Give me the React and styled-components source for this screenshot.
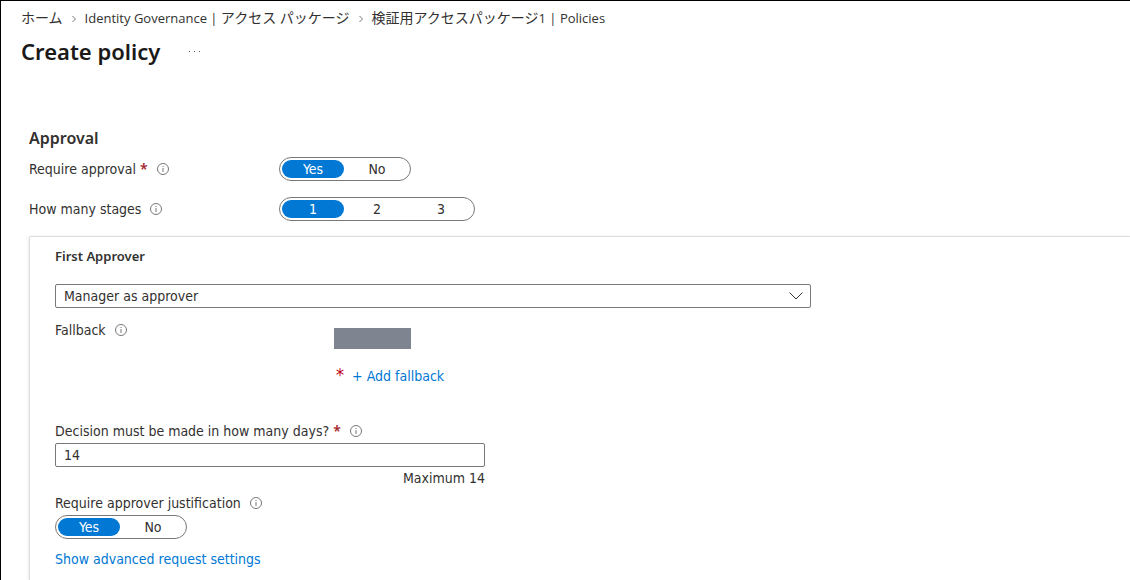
import { useState } from "react";
import styled, { createGlobalStyle } from "styled-components";

const GlobalStyle = createGlobalStyle`
    * {
        box-sizing: border-box;
    }

    body {
        margin: 0;
        background-color: #fff;
        color: #323130;
        font-family: "DejaVu Sans Condensed", "Noto Sans CJK JP", sans-serif;
        font-size: 14px;
        line-height: 20px;
    }

    button, input, select {
        font: inherit;
        color: inherit;
    }
`;

const Page = styled.div`
    display: flex;
    flex-direction: column;
    min-height: 100vh;
    border-top: 1px solid #000;
    border-left: 1px solid #000;
`;

// header
const Header = styled.header`
    padding: 7px 20px 0;
    font-family: "Open Sans", "Noto Sans CJK JP", sans-serif;
`;

const Breadcrumb = styled.nav`
    display: flex;
    align-items: center;
    font-size: 13px;
    line-height: 20px;
    white-space: pre;
`;

const Crumb = styled.a`
    color: #323130;
    text-decoration: none;

    &:hover {
        text-decoration: underline;
    }
`;

const Ja = styled.span`
    font-size: 14px;
`;

const Separator = styled.svg`
    width: 4px;
    height: 8px;
    margin: 2px 9px 0;
    fill: none;
    stroke: #797775;
`;

const TitleRow = styled.div`
    display: flex;
    align-items: center;
    gap: 28px;
    padding-top: 8px;
`;

const Title = styled.h1`
    margin: 0;
    font-family: "Noto Sans", sans-serif;
    font-size: 22px;
    font-weight: 600;
    line-height: 30px;
    color: #1b1a19;
`;

const MoreButton = styled.button`
    display: flex;
    padding: 2px 0 0;
    border: none;
    background: none;
    cursor: pointer;
`;

// form
const Form = styled.form`
    display: flex;
    flex-direction: column;
    flex: 1;
    padding: 62px 0 0 28px;
`;

const SectionTitle = styled.h2`
    margin: 0 0 9px;
    font-family: "Noto Sans", sans-serif;
    font-size: 16px;
    font-weight: 600;
    line-height: 20px;
`;

const FieldRow = styled.div`
    display: flex;
    align-items: center;
    height: 24px;
    margin-bottom: 16px;
`;

const LabelCell = styled.div`
    width: 250px;
`;

const LabelLine = styled.div`
    display: flex;
    align-items: center;
    gap: 9px;
    height: 24px;
`;

const Required = styled.span`
    color: #a4262c;
    font-family: "Noto Sans", sans-serif;
    font-weight: 600;
    line-height: 16px;
`;

const InfoSvg = styled.svg`
    width: 12px;
    height: 12px;
    flex: none;
    fill: none;
    stroke: #797775;
`;

const ToggleGroup = styled.div`
    display: inline-flex;
    height: 24px;
    padding: 2px;
    border: 1px solid #7a7876;
    border-radius: 12px;
`;

const ToggleOption = styled.label`
    position: relative;
    width: 62px;
    margin-right: 2px;
    border-radius: 9px;
    line-height: 18px;
    text-align: center;
    cursor: pointer;
    background-color: ${({ $active }) => ($active ? '#0078d4' : 'transparent')};
    color: ${({ $active }) => ($active ? '#fff' : '#323130')};

    &:last-child {
        margin-right: 0;
    }
`;

const ToggleInput = styled.input`
    position: absolute;
    inset: 0;
    margin: 0;
    opacity: 0;
    cursor: pointer;
`;

const Card = styled.section`
    flex: 1;
    margin-top: -1px;
    padding: 9px 24px 10px 25px;
    border-top: 1px solid #e1dfdd;
    border-left: 1px solid #e1dfdd;
    border-top-left-radius: 2px;
    box-shadow: -1px 0 3px rgba(0, 0, 0, 0.08);
`;

const CardTitle = styled.h3`
    margin: 0 0 18px;
    font-family: "Noto Sans", sans-serif;
    font-size: 13px;
    font-weight: 600;
    line-height: 20px;
`;

const SelectWrapper = styled.div`
    position: relative;
    max-width: 756px;
    margin-bottom: 10px;
`;

const Select = styled.select`
    display: block;
    width: 100%;
    height: 24px;
    padding: 0 32px 0 8px;
    border: 1px solid #7a7876;
    border-radius: 2px;
    background-color: #fff;
    appearance: none;
`;

const SelectArrow = styled.svg`
    position: absolute;
    top: 8px;
    right: 8px;
    width: 14px;
    height: 8px;
    fill: none;
    stroke: #323130;
    pointer-events: none;
`;

const FallbackRow = styled.div`
    display: flex;
    align-items: flex-start;
    margin-bottom: 33px;
`;

const FallbackLabel = styled.div`
    width: 279px;
`;

const FallbackBody = styled.div`
    display: flex;
    flex-direction: column;
    gap: 17px;
    padding-top: 10px;
`;

const MaskedName = styled.div`
    width: 77px;
    height: 21px;
    background-color: #7f8590;
`;

const AddLine = styled.div`
    display: flex;
    align-items: flex-start;
    gap: 8px;
    padding-left: 2px;
`;

const Star = styled.span`
    color: #c00016;
    font-family: "DejaVu Sans Condensed", sans-serif;
    font-size: 18px;
    line-height: 18px;
`;

const LinkButton = styled.button`
    padding: 0;
    border: none;
    background: none;
    color: #0078d4;
    cursor: pointer;
`;

const DaysField = styled.div`
    max-width: 430px;
    margin-bottom: 3px;
`;

const TextInput = styled.input`
    display: block;
    width: 100%;
    height: 24px;
    padding: 0 8px;
    border: 1px solid #7a7876;
    border-radius: 2px;
    outline: none;
`;

const Hint = styled.div`
    padding-top: 1px;
    text-align: right;
`;

const Link = styled.a`
    display: block;
    width: fit-content;
    margin-top: 10px;
    color: #0078d4;
    text-decoration: none;
`;

function InfoIcon() {
    return (
        <InfoSvg viewBox="0 0 12 12" aria-hidden="true">
            <circle cx="6" cy="6" r="5.5" />
            <path d="M6 5v4M6 3v1" />
        </InfoSvg>
    )
}

function Chevron() {
    return (
        <Separator viewBox="0 0 4 8" aria-hidden="true">
            <path d="M0.5 1l3 3-3 3" />
        </Separator>
    )
}

function Toggle({ name, options, labelledBy }) {
    const [value, setValue] = useState(options[0]);

    return (
        <ToggleGroup role="radiogroup" aria-labelledby={labelledBy}>
            {options.map((option) => (
                <ToggleOption key={option} $active={option === value}>
                    <ToggleInput
                        type="radio"
                        name={name}
                        checked={option === value}
                        onChange={() => setValue(option)}
                    />
                    {option}
                </ToggleOption>
            ))}
        </ToggleGroup>
    )
}

function App() {
    const [days, setDays] = useState('14');

    return (
        <>
            <GlobalStyle />
            <Page>
                <Header>
                    <Breadcrumb aria-label="Breadcrumb">
                        <Crumb href="#home"><Ja>ホーム</Ja></Crumb>
                        <Chevron />
                        <Crumb href="#packages">Identity Governance | <Ja>アクセス パッケージ</Ja></Crumb>
                        <Chevron />
                        <Crumb href="#policies"><Ja>検証用アクセスパッケージ</Ja>1 | Policies</Crumb>
                    </Breadcrumb>
                    <TitleRow>
                        <Title>Create policy</Title>
                        <MoreButton type="button" aria-label="More">
                            <svg width="12" height="2" fill="#605e5c">
                                <rect x="1" width="1" height="1" />
                                <rect x="6" width="1" height="1" />
                                <rect x="11" width="1" height="1" />
                            </svg>
                        </MoreButton>
                    </TitleRow>
                </Header>

                <Form onSubmit={(e) => e.preventDefault()}>
                    <SectionTitle>Approval</SectionTitle>
                    <FieldRow>
                        <LabelCell>
                            <LabelLine>
                                <span id="approval-label">Require approval <Required>*</Required></span>
                                <InfoIcon />
                            </LabelLine>
                        </LabelCell>
                        <Toggle name="approval" options={['Yes', 'No']} labelledBy="approval-label" />
                    </FieldRow>
                    <FieldRow>
                        <LabelCell>
                            <LabelLine>
                                <span id="stages-label">How many stages</span>
                                <InfoIcon />
                            </LabelLine>
                        </LabelCell>
                        <Toggle name="stages" options={['1', '2', '3']} labelledBy="stages-label" />
                    </FieldRow>

                    <Card>
                        <CardTitle>First Approver</CardTitle>
                        <SelectWrapper>
                            <Select aria-label="First Approver">
                                <option>Manager as approver</option>
                            </Select>
                            <SelectArrow viewBox="0 0 14 8" aria-hidden="true">
                                <path d="M0.5 0.5L7 7l6.500-6.500" />
                            </SelectArrow>
                        </SelectWrapper>

                        <FallbackRow>
                            <FallbackLabel>
                                <LabelLine>
                                    <span>Fallback</span>
                                    <InfoIcon />
                                </LabelLine>
                            </FallbackLabel>
                            <FallbackBody>
                                <MaskedName />
                                <AddLine>
                                    <Star>*</Star>
                                    <LinkButton type="button">+ Add fallback</LinkButton>
                                </AddLine>
                            </FallbackBody>
                        </FallbackRow>

                        <DaysField>
                            <LabelLine>
                                <label htmlFor="days">Decision must be made in how many days? <Required>*</Required></label>
                                <InfoIcon />
                            </LabelLine>
                            <TextInput id="days" value={days} onChange={(e) => setDays(e.target.value)} />
                            <Hint>Maximum 14</Hint>
                        </DaysField>

                        <LabelLine>
                            <span id="justification-label">Require approver justification</span>
                            <InfoIcon />
                        </LabelLine>
                        <Toggle name="justification" options={['Yes', 'No']} labelledBy="justification-label" />
                        <Link href="#advanced">Show advanced request settings</Link>
                    </Card>
                </Form>
            </Page>
        </>
    )
}
export default App;
